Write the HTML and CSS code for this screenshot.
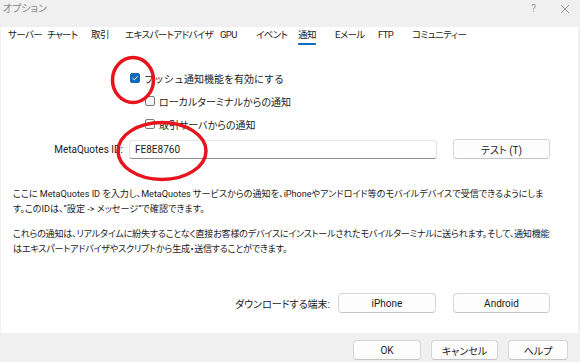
FILE: index.html
```html
<!DOCTYPE html>
<html lang="ja">
<head>
  <meta charset="UTF-8" />
  <meta name="viewport" content="width=device-width, initial-scale=1.0"/>
  <title>オプション</title>
  <link rel="stylesheet" href="styles.css">
</head>
<body>
  <div class="dialog">
    <div class="titlebar">
      <span class="title">オプション</span>
      <span class="ctrl help">?</span>
      <span class="ctrl close">
        <svg width="10" height="10" viewBox="0 0 10 10"><path d="M1 1 L9 9 M9 1 L1 9" stroke="#9a9a9a" stroke-width="1" fill="none"/></svg>
      </span>
    </div>

    <div class="panel">
      <nav class="tabs">
        <span class="tab">サーバー</span>
        <span class="tab">チャート</span>
        <span class="tab">取引</span>
        <span class="tab">エキスパートアドバイザ</span>
        <span class="tab">GPU</span>
        <span class="tab">イベント</span>
        <span class="tab active">通知</span>
        <span class="tab">Eメール</span>
        <span class="tab">FTP</span>
        <span class="tab">コミュニティー</span>
      </nav>

      <div class="options">
        <label class="check main">
          <span class="box checked">
            <svg width="10" height="10" viewBox="0 0 10 10"><path d="M2.6 5.2 L4.3 6.8 L7.5 3.4" stroke="#fff" stroke-width="1" fill="none"/></svg>
          </span>
          プッシュ通知機能を有効にする
        </label>
        <label class="check sub"><span class="box"></span>ローカルターミナルからの通知</label>
        <label class="check sub"><span class="box"></span>取引サーバからの通知</label>
      </div>

      <div class="id-row">
        <span class="field-label">MetaQuotes ID:</span>
        <div class="input">FE8E8760</div>
        <button class="btn btn-test">テスト (T)</button>
      </div>

      <p class="note">ここに MetaQuotes ID を入力し、MetaQuotes サービスからの通知を、iPhoneやアンドロイド等のモバイルデバイスで受信できるようにしま<br>す。このIDは、“設定 -&gt; メッセージ”で確認できます。</p>
      <p class="note tight">これらの通知は、リアルタイムに紛失することなく直接お客様のデバイスにインストールされたモバイルターミナルに送られます。そして、通知機能<br>はエキスパートアドバイザやスクリプトから生成・送信することができます。</p>

      <div class="download-row">
        <span class="field-label">ダウンロードする端末:</span>
        <button class="btn btn-store">iPhone</button>
        <button class="btn btn-store">Android</button>
      </div>
    </div>

    <div class="footer">
      <button class="btn btn-ok">OK</button>
      <button class="btn btn-cancel">キャンセル</button>
      <button class="btn btn-help">ヘルプ</button>
    </div>

    <svg class="marks" width="580" height="362" viewBox="0 0 580 362">
      <ellipse cx="133" cy="80" rx="20.5" ry="22.5" stroke="#e5141d" stroke-width="3.5" fill="none"/>
      <ellipse cx="162" cy="151" rx="44" ry="28.5" stroke="#e5141d" stroke-width="3.5" fill="none"/>
    </svg>
  </div>
</body>
</html>
```

FILE: styles.css
```css
:root {
  --bg: #f0f0f0;
  --panel: #fff;
  --text: #1b1b1b;
  --muted: #8a8a8a;
  --accent: #0f6cbd;
  --border: #d6d6d6;
}
html, body {
  margin: 0;
  background: var(--bg);
}
body {
  font-family: Roboto, "Noto Sans CJK JP", sans-serif;
  font-size: 10px;
  font-feature-settings: "palt";
  color: var(--text);
}
.dialog {
  position: relative;
  width: 580px;
  height: 362px;
  overflow: hidden;
}
.titlebar {
  height: 27px;
  display: flex;
  align-items: flex-start;
  padding: 2px 0 0 3px;
  box-sizing: border-box;
}
.title {
  color: var(--muted);
  line-height: 13px;
  flex: 1;
}
.ctrl {
  color: #9a9a9a;
  line-height: 13px;
}
.help {
  margin-right: 24px;
}
.close {
  margin-right: 10px;
  padding-top: 2px;
}
.panel {
  height: 306px;
  margin: 0 2px 0 1px;
  background: var(--panel);
  display: flex;
  flex-direction: column;
}
.tabs {
  display: grid;
  grid-template-columns: 39px 44px 34px 95px 36px 42px 37px 43px 34px auto;
  padding: 1px 0 0 7px;
  align-items: start;
  font-size: 9.5px;
  letter-spacing: -0.6px;
}
.tab {
  justify-self: start;
  line-height: 13px;
  padding-bottom: 2px;
  border-bottom: 2px solid transparent;
  white-space: nowrap;
}
.tab.active {
  border-bottom-color: var(--accent);
  border-radius: 1px;
}
.options {
  margin-top: 25px;
  display: flex;
  flex-direction: column;
  gap: 7px;
}
.check {
  display: flex;
  align-items: center;
  gap: 4px;
  height: 16px;
  padding-left: 144px;
}
.check.main {
  padding-left: 129px;
  font-feature-settings: normal;
}
.box {
  width: 10px;
  height: 10px;
  box-sizing: border-box;
  border: 1px solid #7a7a7a;
  border-radius: 2px;
  background: #f7f7f7;
  display: flex;
}
.box.checked {
  border-color: var(--accent);
  background: var(--accent);
}
.box.checked svg {
  margin: -1px;
}
.id-row, .download-row {
  display: flex;
  align-items: center;
  height: 20px;
}
.id-row {
  margin-top: 7px;
}
.field-label {
  text-align: right;
  box-sizing: border-box;
  white-space: nowrap;
}
.id-row .field-label {
  width: 122px;
  margin-right: 6px;
}
.input {
  width: 308px;
  height: 19px;
  box-sizing: border-box;
  border: 1px solid #e3e3e3;
  border-bottom-color: #8f8f8f;
  border-radius: 3px;
  padding-left: 5px;
  line-height: 17px;
}
.btn {
  font-family: inherit;
  font-size: 10px;
  font-feature-settings: "palt";
  color: var(--text);
  background: #fdfdfd;
  border: 1px solid var(--border);
  border-bottom-color: #c4c4c4;
  border-radius: 4px;
  height: 20px;
  padding: 0;
  box-sizing: border-box;
}
.btn-test {
  width: 97px;
  margin-left: 16px;
}
.note {
  margin: 0 12px;
  font-size: 9.1px;
  line-height: 15px;
  white-space: nowrap;
}
.note.tight {
  letter-spacing: -0.25px;
}
.note:first-of-type {
  margin-top: 28px;
}
.note + .note {
  margin-top: 10px;
}
.download-row {
  margin-top: 36px;
}
.download-row .field-label {
  width: 329px;
  margin-right: 8px;
}
.btn-store {
  width: 98px;
}
.btn-store + .btn-store {
  margin-left: 17px;
  width: 97px;
}
.footer {
  display: flex;
  justify-content: flex-end;
  gap: 10px;
  padding: 7px 12px 0 0;
}
.btn-ok { width: 68px; }
.btn-cancel { width: 67px; }
.btn-help { width: 60px; }
.marks {
  position: absolute;
  left: 0;
  top: 0;
  pointer-events: none;
}
```
